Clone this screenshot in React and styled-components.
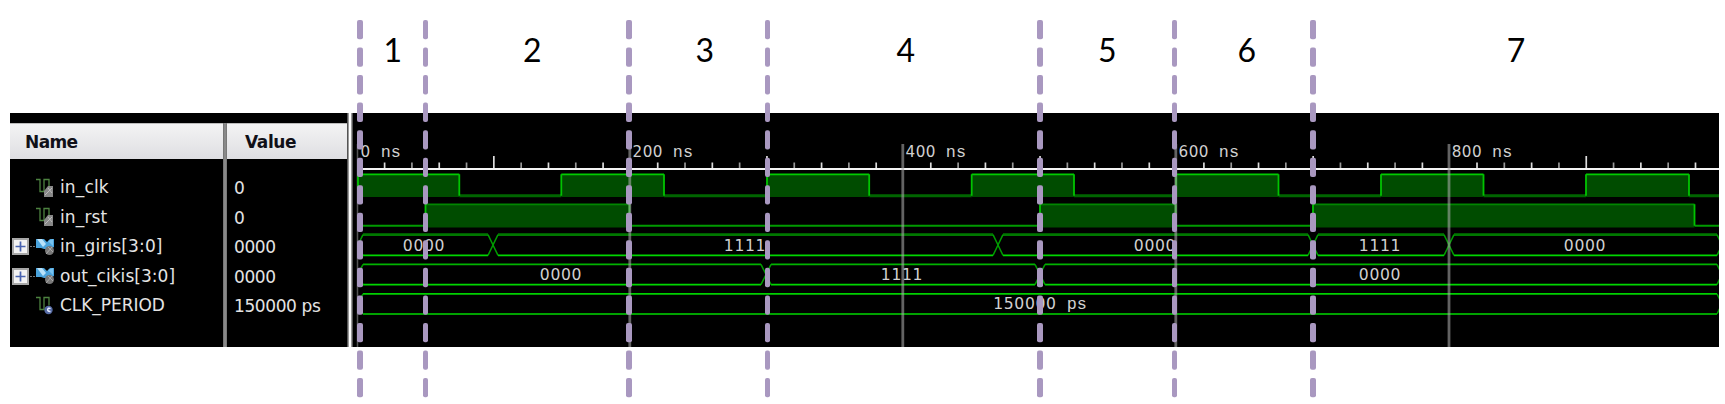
import React from "react";
import styled, { createGlobalStyle } from "styled-components";

const Global = createGlobalStyle`
  body { margin: 0; background: #fff; }
  * { box-sizing: border-box; }
`;

const Page = styled.main`
  position: relative;
  width: 1725px;
  height: 404px;
  overflow: hidden;
  background: #fff;
`;

const Phases = styled.header`
  display: flex;
  height: 113px;
  padding: 27px 0 0 360px;
`;

const Phase = styled.span`
  width: ${(p) => p.$width}px;
  padding-left: ${(p) => p.$shift}px;
  text-align: center;
  flex: none;
  font: 32px/46px Lato, sans-serif;
  color: #000;
`;

const Viewer = styled.section`
  display: flex;
  width: 1709px;
  height: 234px;
  margin-left: 10px;
  background: #000;
  color: #e4e4e4;
  font-family: "DejaVu Sans", sans-serif;
`;

const Column = styled.div`
  width: ${(p) => p.$width}px;
  flex: none;
  padding-top: 10px;
`;

const Divider = styled.div`
  width: 4px;
  flex: none;
  margin-top: 10px;
  background: linear-gradient(90deg, #6d6d6d, #929292 50%, #707070);
`;

const PanelEdge = styled.div`
  width: 6px;
  flex: none;
  background: linear-gradient(90deg, #555 0 1px, #9a9a9a 1px 2px, #fff 2px 4px, #9a9a9a 4px 5px, #555 5px);
`;

const Heading = styled.div`
  height: 36px;
  padding: 1px 0 0 ${(p) => p.$indent}px;
  border-top: 1px solid #bbb;
  background: linear-gradient(#f3f3f4, #e8e8ea 55%, #dedee2);
  color: #101018;
  font-size: 17px;
  font-weight: 700;
  line-height: 35px;
  letter-spacing: ${(p) => p.$tracking}px;
`;

const Rows = styled.div`
  padding-top: ${(p) => p.$top}px;
`;

const Row = styled.div`
  display: flex;
  align-items: center;
  height: 29.5px;
  padding-left: ${(p) => p.$indent}px;
  font-size: 17px;
  line-height: 29px;
  white-space: pre;
  letter-spacing: ${(p) => p.$tracking}px;
`;

const Toggle = styled.span`
  width: 23px;
  height: 17px;
  flex: none;
  display: flex;
`;

const IconSlot = styled.span`
  width: 25px;
  height: 20px;
  flex: none;
  display: flex;
`;

const Chart = styled.svg`
  display: block;
  flex: none;
`;

const Digits = styled.text`
  font-family: "DejaVu Sans", sans-serif;
  font-size: ${(p) => p.$size}px;
  letter-spacing: ${(p) => p.$tracking}px;
  fill: #d0d0d0;
`;

const Unit = styled.tspan`
  font-family: "Liberation Mono", monospace;
  font-size: 16.8px;
  letter-spacing: 0;
`;

const Overlay = styled.svg`
  position: absolute;
  inset: 0;
  pointer-events: none;
`;

function SignalIcon({ kind }) {
  if (kind === "bus")
    return (
      <svg width="20" height="20" viewBox="0 0 20 20">
        <path d="M1 2h8l3 3 3-3h4v8l-4 2H9l-3-1H1z" fill="#4aa3dc" />
        <path d="M2 2h5l4 5-3 3z" fill="#b9e2fa" />
        <path d="M13 4l5-2v7z" fill="#78c2ee" />
        <circle cx="14.5" cy="13.5" r="4.5" fill="#787878" />
        <path d="M11 17l6-7M13 10l5 5" stroke="#aaa" />
      </svg>
    );
  return (
    <svg width="20" height="20" viewBox="0 0 20 20" fill="none">
      <path d="M1 1.500h4v12h4v-12h5v8" stroke="#4d8240" strokeWidth="1.300" />
      {kind === "constant" ? (
        <>
          <circle cx="13.500" cy="14" r="4.200" fill="#566ba5" />
          <path d="M15.500 12.700c-3-2-4.500 3 0 2.700" stroke="#e8edff" strokeWidth="1.500" />
        </>
      ) : (
        <>
          <path d="M13 8h5v11H9v-6z" fill="#888" />
          <path d="M10 17l7-7M13 10l4 5" stroke="#bbb" />
        </>
      )}
    </svg>
  );
}

function Expander() {
  return (
    <svg width="23" height="17" viewBox="0 0 23 17">
      <rect x="1" y="1" width="15" height="15" fill="#f3f3f3" stroke="#a8a8a8" strokeWidth="2" />
      <path d="M3.500 8.500h10M8.500 3.500v10" stroke="#4963b0" strokeWidth="1.700" />
      <path d="M18 8.500h5" stroke="#777" strokeDasharray="2 1" />
    </svg>
  );
}

const signals = [
  { name: "in_clk", value: "0", kind: "signal", tracking: 0.15 },
  { name: "in_rst", value: "0", kind: "signal", tracking: 0.15 },
  { name: "in_giris[3:0]", value: "0000", kind: "bus", tracking: 0.15 },
  { name: "out_cikis[3:0]", value: "0000", kind: "bus", tracking: 0.05 },
  { name: "CLK_PERIOD", value: "150000 ps", kind: "constant", tracking: -0.05 },
];

const phases = [
  [65.5, 0],
  [203.5, 10],
  [138.5, 13],
  [272.5, 4],
  [134.5, 0],
  [138.5, 6],
  [406, 0],
];

const clockEdges = [[358, 459.3], [561.3, 664], [767, 869.2], [971.7, 1074], [1176, 1278.5], [1381, 1483.5], [1586, 1689]];
const resetEdges = [[425.5, 629.5], [1040, 1175.8], [1313, 1694.5]];

function Logic({ edges, top, low, base, topColor, lowColor, lowWidth }) {
  let path = `M358 ${low}`;
  edges.forEach(([a, b]) => {
    path += `H${a}M${b} ${low}`;
  });
  path += "H1719";
  return (
    <g fill="none">
      <path d={path} stroke={lowColor} strokeWidth={lowWidth} />
      {edges.map(([a, b]) => (
        <g key={a}>
          <rect x={a} y={top} width={b - a} height={base - top} fill="#004c00" />
          <path d={`M${a} ${top}H${b}`} stroke={topColor} strokeWidth="1.8" />
          <path d={`M${a} ${low}V${top}M${b} ${top}V${low}`} stroke="#00c400" strokeWidth="1.8" />
        </g>
      ))}
    </g>
  );
}

function Bus({ cuts, top, bottom, topColor = "#00b400", topWidth = 1.8, labels }) {
  const mid = (top + bottom) / 2;
  const points = [358, ...cuts, 1722];
  return (
    <g fill="none">
      {points.slice(0, -1).map((a, i) => {
        const b = points[i + 1];
        return (
          <g key={a}>
            <path d={`M${a + 5} ${top}H${b - 5}`} stroke={topColor} strokeWidth={topWidth} />
            <path d={`M${a + 5} ${bottom}H${b - 5}`} stroke="#00d800" strokeWidth="1.7" />
            <path
              d={`M${a + 5} ${top}L${a} ${mid}L${a + 5} ${bottom}M${b - 5} ${top}L${b} ${mid}L${b - 5} ${bottom}`}
              stroke="#009c00"
              strokeWidth="1.5"
            />
          </g>
        );
      })}
      {labels.map(([x, text, unit]) => (
        <Digits key={x} x={x} y={bottom - 4.7} $size={15.6} $tracking={0.66} textAnchor="middle">
          {text}
          {unit && <Unit>{"\u00a0" + unit}</Unit>}
        </Digits>
      ))}
    </g>
  );
}

function Waves() {
  const ticks = Array.from({ length: 49 }, (_, i) => i + 1).filter((i) => i % 10);
  return (
    <Chart width="1366" height="234" viewBox="353 113 1366 234">
      <path d="M357.500 144V347" stroke="#555" strokeWidth="1.500" />
      {ticks.map((i) => (
        <path
          key={i}
          d={`M${357.3 + i * 27.31} ${i % 5 ? 162.5 : 156}V169`}
          stroke={i % 2 ? "#ddd" : "#999"}
          strokeWidth="1.700"
        />
      ))}
      <path d="M358 169H1719" stroke="#f4f4f4" strokeWidth="1.800" />
      <Logic edges={clockEdges} top={174.3} low={195.7} base={197} topColor="#00cc00" lowColor="#006500" lowWidth={3} />
      <Logic edges={resetEdges} top={204.3} low={225.8} base={227.5} topColor="#008600" lowColor="#009b00" lowWidth={2} />
      <Bus
        cuts={[493, 998, 1313, 1449]}
        top={234.7}
        bottom={255.3}
        topColor="#007800"
        topWidth={2.7}
        labels={[[424, "0000"], [745, "1111"], [1155, "0000"], [1380, "1111"], [1585, "0000"]]}
      />
      <Bus cuts={[766, 1040]} top={264.4} bottom={284.6} labels={[[561, "0000"], [902, "1111"], [1380, "0000"]]} />
      <Bus cuts={[]} top={293.9} bottom={314} topColor="#00d000" labels={[[1040, "150000", "ps"]]} />
      {[629.8, 902.8, 1175.8, 1449].map((x, i) => (
        <React.Fragment key={x}>
          <path d={`M${x} 144V347`} stroke="#aaa" strokeOpacity=".58" strokeWidth="2.800" />
          <Digits x={x + 2.8} y="157" $size={15.2} $tracking={0.4}>
            {(i + 1) * 200}
            <Unit>{"\u00a0ns"}</Unit>
          </Digits>
        </React.Fragment>
      ))}
      <Digits x="360.500" y="157" $size={15.2} $tracking={0.4}>
        0<Unit>{"\u00a0ns"}</Unit>
      </Digits>
    </Chart>
  );
}

const markers = [[357, 6], [423, 5], [626, 6], [765, 5], [1037, 6], [1172, 5], [1310, 6]];

function Markers() {
  return (
    <Overlay width="1725" height="404">
      {markers.map(([x, width]) =>
        Array.from({ length: 14 }, (_, i) => (
          <rect key={`${x}-${i}`} x={x} y={20 + i * 27.54} width={width} height="19.300" rx="2" fill="#a998c0" />
        ))
      )}
    </Overlay>
  );
}

export default function App() {
  return (
    <Page>
      <Global />
      <Phases>
        {phases.map(([width, shift], i) => (
          <Phase key={i} $width={width} $shift={shift}>{i + 1}</Phase>
        ))}
      </Phases>
      <Viewer>
        <Column $width={213}>
          <Heading $indent={15} $tracking={-0.6}>Name</Heading>
          <Rows $top={14}>
            {signals.map((s) => (
              <Row key={s.name} $indent={2} $tracking={s.tracking}>
                <Toggle>{s.kind === "bus" && <Expander />}</Toggle>
                <IconSlot><SignalIcon kind={s.kind} /></IconSlot>
                {s.name}
              </Row>
            ))}
          </Rows>
        </Column>
        <Divider />
        <Column $width={120}>
          <Heading $indent={18} $tracking={-0.4}>Value</Heading>
          <Rows $top={15}>
            {signals.map((s) => (
              <Row key={s.name} $indent={7} $tracking={-0.4}>{s.value}</Row>
            ))}
          </Rows>
        </Column>
        <PanelEdge />
        <Waves />
      </Viewer>
      <Markers />
    </Page>
  );
}
